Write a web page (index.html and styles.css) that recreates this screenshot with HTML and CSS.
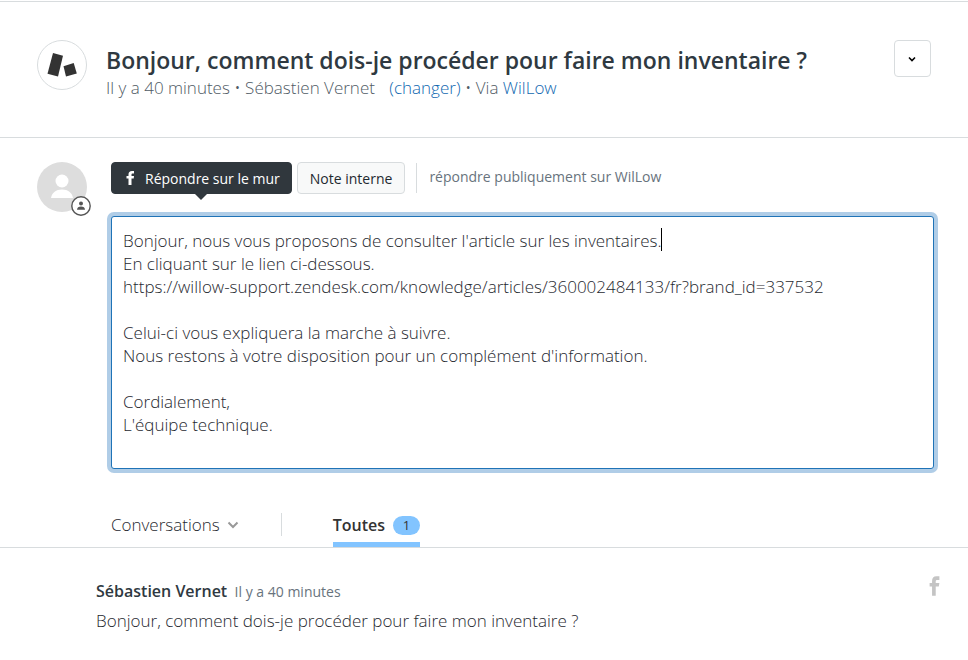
FILE: index.html
```html
<!DOCTYPE html>
<html lang="fr">

<head>
    <meta charset="UTF-8">
    <meta name="viewport" content="width=device-width, initial-scale=1.0">
    <title>Bonjour, comment dois-je procéder pour faire mon inventaire ?</title>
    <link rel="stylesheet" href="styles.css">
</head>

<body>

    <!-- Ticket header -->
    <header class="ticket-header">
        <svg class="brand-logo" viewBox="0 0 50 50" aria-hidden="true">
            <circle cx="25" cy="25" r="24.5" fill="#fff" stroke="#d8dcde" />
            <path d="M16 13L26 15.700L21 36.500L10.500 33.700Z" fill="#333" />
            <path d="M26.500 26.200L36.700 23L39.800 33.500L29 36.500Z" fill="#333" />
        </svg>
        <div class="ticket-title">
            <h1>Bonjour, comment dois-je procéder pour faire mon inventaire ?</h1>
            <p class="ticket-meta">Il y a 40 minutes • Sébastien Vernet <a class="change-link" href="#">(changer)</a> • Via <a href="#">WilLow</a></p>
        </div>
        <button class="menu-button" type="button" aria-label="Options">
            <svg width="10" height="6" viewBox="0 0 10 6"><path d="M1 1.500L4 4.500L7 1.500" fill="none" stroke="#000" stroke-width="1.600" /></svg>
        </button>
    </header>

    <!-- Reply editor -->
    <section class="reply">
        <div class="avatar">
            <svg width="50" height="50" viewBox="0 0 50 50" aria-hidden="true">
                <circle cx="25" cy="25" r="25" fill="#ddd" />
                <circle cx="25" cy="19" r="6.500" fill="#fff" />
                <path d="M14 36C15 30.500 19 27.500 25 27.500S35 30.500 36 36Z" fill="#fff" />
            </svg>
            <svg class="avatar-badge" width="20" height="20" viewBox="0 0 20 20" aria-hidden="true">
                <circle cx="10" cy="10" r="9.200" fill="#fff" stroke="#555" stroke-width="1.400" />
                <circle cx="10" cy="7.500" r="2" fill="#555" />
                <path d="M6 13.700C6.200 11.500 7.500 10.500 10 10.500S13.800 11.500 14 13.700Z" fill="#555" />
            </svg>
        </div>
        <div class="editor">
            <div class="reply-bar">
                <button class="reply-button active" type="button">
                    <svg width="9" height="14" viewBox="0 0 9 14"><path d="M2.500 14V7.500H0.500V5H2.500V3.500C2.500 1.200 3.700 0 6 0H8V2.500H6.700C5.800 2.500 5.500 2.900 5.500 3.600V5H8L7.700 7.500H5.500V14Z" fill="#fff" /></svg>
                    Répondre sur le mur
                </button>
                <button class="reply-button" type="button">Note interne</button>
                <label class="reply-hint" for="comment">répondre publiquement sur WilLow</label>
            </div>
            <div class="comment-box">
                <textarea class="comment" id="comment" rows="10" spellcheck="false">Bonjour, nous vous proposons de consulter l'article sur les inventaires.
En cliquant sur le lien ci-dessous.
https://willow-support.zendesk.com/knowledge/articles/360002484133/fr?brand_id=337532

Celui-ci vous expliquera la marche à suivre.
Nous restons à votre disposition pour un complément d'information.

Cordialement,
L'équipe technique.</textarea>
                <span class="caret"></span>
            </div>
        </div>
    </section>

    <!-- Conversation tabs -->
    <nav class="tabs">
        <button class="tab-menu" type="button">
            Conversations
            <svg width="12" height="8" viewBox="0 0 12 8"><path d="M1.500 1.500L6 6L10.500 1.500" fill="none" stroke="#999" stroke-width="2" /></svg>
        </button>
        <button class="tab" type="button">Toutes <span class="count">1</span></button>
    </nav>

    <!-- Messages -->
    <article class="message">
        <div class="message-body">
            <p class="message-author"><strong>Sébastien Vernet</strong> <time>Il y a 40 minutes</time></p>
            <p class="message-text">Bonjour, comment dois-je procéder pour faire mon inventaire ?</p>
        </div>
        <svg class="channel" width="11" height="20" viewBox="0 0 9 16" aria-hidden="true"><path d="M2.500 16V8.500H0.500V5.500H2.500V4C2.500 1.200 3.700 0 6 0H8.500V3H7C6 3 5.500 3.300 5.500 4.200V5.500H8.500L8 8.500H5.500V16Z" fill="#c4c4c4" /></svg>
    </article>

</body>

</html>
```

FILE: styles.css
```css
* {
    box-sizing: border-box;
}

body {
    margin: 0;
    padding-top: 1px;
    font-family: "Open Sans", "Noto Sans", sans-serif;
    font-size: 17px;
    font-weight: 300;
    line-height: 23px;
    color: #1f2930;
    background-color: #fff;
}

h1,
p {
    margin: 0;
}

a {
    color: #1068b0;
    text-decoration: none;
}

button {
    font-family: inherit;
    font-weight: inherit;
    color: inherit;
    cursor: pointer;
}

.ticket-header {
    display: flex;
    align-items: flex-start;
    padding: 38px 37px;
    border-top: 1px solid #d8dcde;
    border-bottom: 1px solid #d8dcde;
}

.brand-logo {
    width: 50px;
    height: 50px;
    margin-right: 19px;
}

.ticket-title {
    flex: 1;
    padding-top: 4px;
}

.ticket-title h1 {
    font-size: 23px;
    font-weight: 600;
    line-height: 32px;
    color: #2f3941;
}

.ticket-meta {
    color: #505b65;
}

.change-link {
    margin-left: 10px;
}

.menu-button {
    display: flex;
    align-items: center;
    justify-content: center;
    width: 37px;
    height: 37px;
    padding: 0;
    background-color: #fff;
    border: 1px solid #d8dcde;
    border-radius: 4px;
}

.reply {
    display: flex;
    gap: 24px;
    padding: 24px 34px 31px 37px;
}

.avatar {
    position: relative;
    width: 50px;
    height: 50px;
}

.avatar-badge {
    position: absolute;
    right: -4px;
    bottom: -4px;
}

.editor {
    flex: 1;
}

.reply-bar {
    display: flex;
    gap: 5px;
    margin-bottom: 22px;
}

.reply-button {
    position: relative;
    display: flex;
    align-items: center;
    gap: 10px;
    height: 32px;
    padding: 0 12px;
    font-size: 14px;
    font-weight: 400;
    background-color: #f8f9f9;
    border: 1px solid #d8dcde;
    border-radius: 4px;
}

.reply-button.active {
    padding: 0 11px 0 14px;
    color: #fff;
    background-color: #30373d;
    border-color: #30373d;
}

/* arrow under the active button */
.reply-button.active::after {
    content: "";
    position: absolute;
    top: 100%;
    left: 50%;
    margin-left: -7px;
    border: 7px solid transparent;
    border-top-color: #30373d;
    border-bottom: 0;
}

.reply-hint {
    height: 30px;
    margin: 1px 0 0 6px;
    padding-left: 12px;
    font-size: 14px;
    font-weight: 400;
    line-height: 28px;
    color: #68737d;
    border-left: 1px solid #d8dcde;
}

.comment-box {
    position: relative;
}

.comment {
    display: block;
    width: 100%;
    padding: 12px 11px 9px;
    font: inherit;
    color: inherit;
    border: 1px solid #1f73b7;
    border-radius: 3px;
    box-shadow: 0 0 0 4px #b0cde7;
    outline: none;
    resize: none;
    overflow: hidden;
}

.caret {
    position: absolute;
    top: 12px;
    left: 550px;
    width: 1px;
    height: 23px;
    background-color: #000;
}

.tabs {
    display: flex;
    align-items: flex-start;
    padding: 0 37px 0 111px;
    border-bottom: 1px solid #d8dcde;
}

.tab-menu {
    display: flex;
    align-items: center;
    gap: 7px;
    margin: 13px 51px 11px 0;
    padding: 0 42px 0 0;
    font-size: 17px;
    line-height: 23px;
    background: none;
    border: 0;
    border-right: 1px solid #d8dcde;
}

.tab {
    display: flex;
    align-items: center;
    gap: 8px;
    margin-top: 9px;
    padding: 5px 0;
    font-size: 16px;
    font-weight: 600;
    line-height: 23px;
    color: #333;
    background: none;
    border: 0;
    border-bottom: 5px solid #82c4ff;
}

.count {
    width: 27px;
    font-size: 13px;
    font-weight: 400;
    line-height: 19px;
    text-align: center;
    background-color: #82c4ff;
    border-radius: 10px;
}

.message {
    display: flex;
    justify-content: space-between;
    align-items: flex-start;
    padding: 28px 28px 28px 96px;
}

.message-author {
    margin: 3px 0 6px;
}

.message-author strong {
    margin-right: 3px;
    font-size: 16px;
    font-weight: 600;
    color: #2f3941;
}

.message-author time {
    font-size: 14px;
    font-weight: 400;
    color: #68737d;
}
```
